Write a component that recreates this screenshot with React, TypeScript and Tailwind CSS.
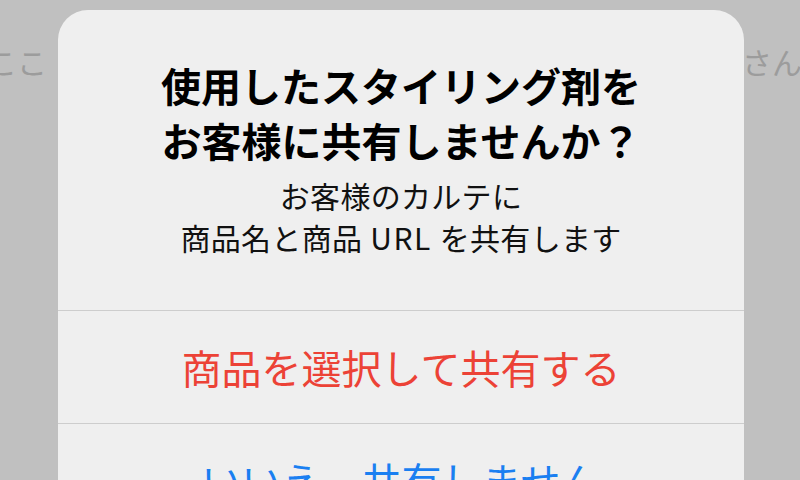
import React from "react";

const jp = { fontFamily: '"Noto Sans CJK JP", "Noto Sans", sans-serif' };

function AlertButton({ label, className }: { label: string; className: string }) {
  return (
    <button
      className={`flex h-[113px] w-full items-center justify-center border-t border-[#cdcdcd] text-[40px] leading-none ${className}`}
    >
      {label}
    </button>
  );
}

export default function App() {
  return (
    <div
      className="relative h-[480px] w-[800px] overflow-hidden bg-[#c0c0c0]"
      style={jp}
    >
      {/* page behind the alert */}
      <div className="flex justify-between pt-[41px] text-[30px] leading-[40px] text-[#9c9c9c]">
        <span className="-ml-[13px]">ここ</span>
        <span className="-mr-[2px]">さん</span>
      </div>

      <div className="absolute left-[58px] top-[10px] w-[686px] overflow-hidden rounded-[30px] bg-[#efefef]">
        <div className="flex flex-col items-center px-6 pt-[48px] pb-[52px] text-center">
          <h2 className="text-[40px] font-bold leading-[55px] text-black">
            使用したスタイリング剤を
            <br />
            お客様に共有しませんか？
          </h2>
          <p className="mt-[6px] text-[30px] leading-[42px] tracking-[0.3px] text-[#111111]">
            お客様のカルテに
            <br />
            商品名と商品<span className="mx-[8px] tracking-[1.5px]">URL</span>を共有します
          </p>
        </div>
        <AlertButton label="商品を選択して共有する" className="text-[#ec4236]" />
        <AlertButton label="いいえ、共有しません" className="text-[#1a7ff1]" />
      </div>
    </div>
  );
}
